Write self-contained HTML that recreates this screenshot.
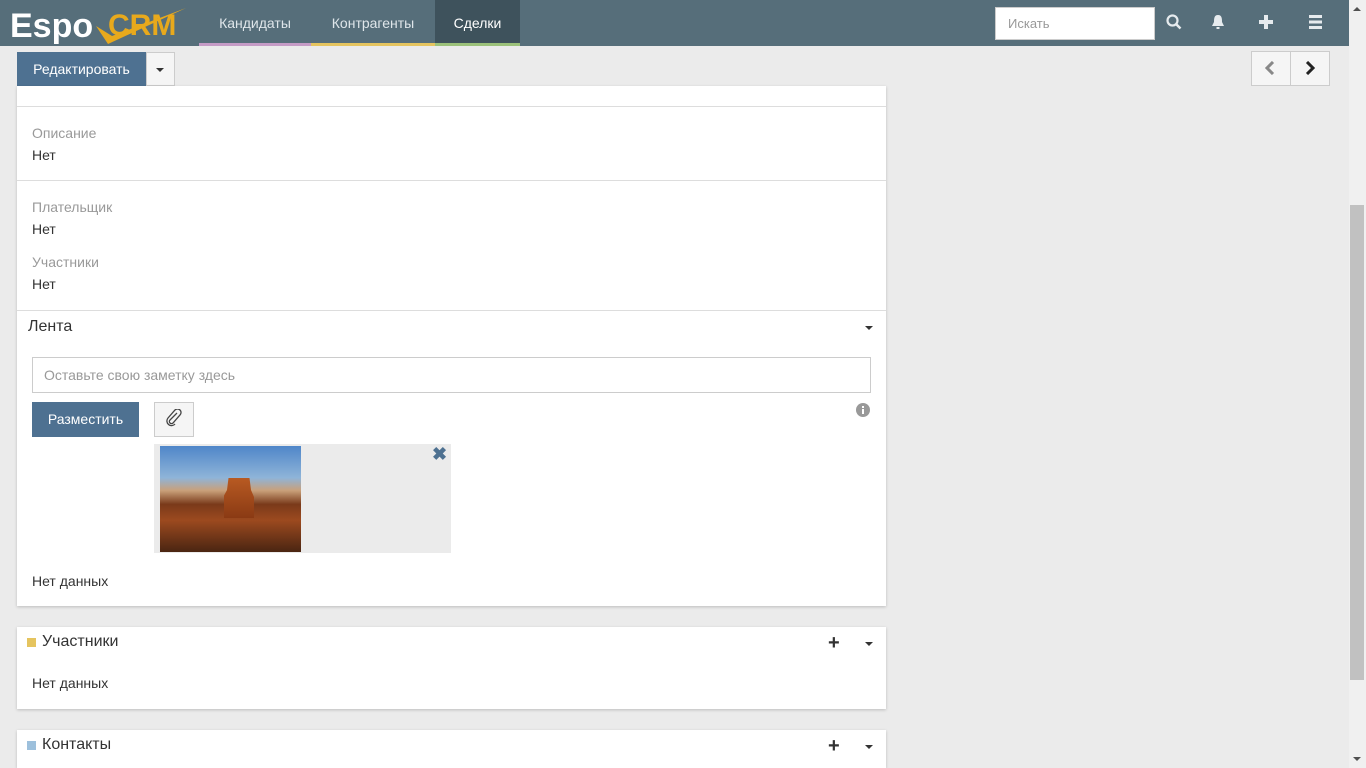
<!DOCTYPE html>
<html style="overflow:hidden;height:768px"><head><meta charset="utf-8"><style>
*{box-sizing:border-box;margin:0;padding:0}
body{width:1366px;height:768px;overflow:hidden;background:#ebebeb;font-family:"Liberation Sans",sans-serif;font-size:14px;color:#333;position:relative}
.nav{position:absolute;left:0;top:0;width:1349px;height:46px;background:#566e7a}
.tab{position:absolute;top:0;height:46px;color:#dfe6ea;font-size:14px;line-height:46px;text-align:center}
.abs{position:absolute}
.panel{position:absolute;left:17px;width:869px;background:#fff;box-shadow:0 1px 3px rgba(0,0,0,.2)}
.lbl{position:absolute;left:32px;color:#999;font-size:14px}
.val{position:absolute;left:32px;color:#333;font-size:14px}
.hr{position:absolute;left:17px;width:869px;height:1px;background:#ddd}
.caret{position:absolute;width:0;height:0;border-left:4px solid transparent;border-right:4px solid transparent;border-top:4px solid #333}
.plus{position:absolute;font-weight:bold;font-size:20px;color:#333;line-height:1}
</style></head><body>
<div class="nav">
 <svg class="abs" style="left:8px;top:4px" width="185" height="40" viewBox="0 0 185 40">
  <text x="2" y="33" font-family="Liberation Sans" font-size="34" font-weight="bold" fill="#fff">Espo</text>
  <text x="100" y="31" font-family="Liberation Sans" font-size="30" font-weight="bold" fill="#e8a91c">CRM</text>
  <path d="M88 22 L100 40 L178 4 L104 32 Z" fill="#e8a91c"/>
 </svg>
 <div class="tab" style="left:199px;width:112px;border-bottom:3px solid #c59bc6">Кандидаты</div>
 <div class="tab" style="left:311px;width:124px;border-bottom:3px solid #e5c45f">Контрагенты</div>
 <div class="tab" style="left:435px;width:85px;background:#3e525c;color:#fff;border-bottom:3px solid #9bc17a">Сделки</div>
 <div class="abs" style="left:995px;top:7px;width:160px;height:33px;background:#fff;border:1px solid #ccc;color:#999;font-size:13px;line-height:31px;padding-left:12px">Искать</div>
 <svg class="abs" style="left:1166px;top:14px" width="16" height="16"><circle cx="6.5" cy="6.5" r="5" stroke="#e6ebee" stroke-width="2.2" fill="none"/><line x1="10" y1="10" x2="14.5" y2="14.5" stroke="#e6ebee" stroke-width="2.5"/></svg>
 <svg class="abs" style="left:1211px;top:14px" width="14" height="16"><path d="M7 1 C3 1 3 5 3 8 L1 12 L13 12 L11 8 C11 5 11 1 7 1Z" fill="#e6ebee"/><rect x="5.5" y="13" width="3" height="2" fill="#e6ebee"/></svg>
 <svg class="abs" style="left:1259px;top:15px" width="14" height="14"><rect x="5" y="0" width="4" height="14" fill="#e6ebee"/><rect x="0" y="5" width="14" height="4" fill="#e6ebee"/></svg>
 <svg class="abs" style="left:1309px;top:15px" width="13" height="14"><rect y="0" width="13" height="3" fill="#e6ebee"/><rect y="5.5" width="13" height="3" fill="#e6ebee"/><rect y="11" width="13" height="3" fill="#e6ebee"/></svg>
</div>
<div class="abs" style="left:1349px;top:0;width:17px;height:768px;background:#f0f0f0"></div>
<div class="abs" style="left:1350px;top:205px;width:14px;height:475px;background:#c1c1c1"></div>
<div class="abs" style="left:1353px;top:7px;border-left:4px solid transparent;border-right:4px solid transparent;border-bottom:4px solid #505050"></div>
<div class="abs" style="left:1353px;top:757px;border-left:4px solid transparent;border-right:4px solid transparent;border-top:4px solid #505050"></div>

<div class="abs" style="left:17px;top:52px;width:129px;height:34px;background:#4e7191;color:#fff;line-height:34px;text-align:center">Редактировать</div>
<div class="abs" style="left:146px;top:52px;width:29px;height:34px;background:#f5f5f5;border:1px solid #ccc"></div>
<div class="caret" style="left:156px;top:68px"></div>
<div class="abs" style="left:1251px;top:51px;width:40px;height:35px;background:#f5f5f5;border:1px solid #ccc"></div>
<div class="abs" style="left:1290px;top:51px;width:40px;height:35px;background:#f5f5f5;border:1px solid #ccc"></div>
<svg class="abs" style="left:1265px;top:61px" width="10" height="14"><path d="M8 1 L2 7 L8 13" stroke="#888" stroke-width="3" fill="none"/></svg>
<svg class="abs" style="left:1305px;top:61px" width="10" height="14"><path d="M2 1 L8 7 L2 13" stroke="#222" stroke-width="3" fill="none"/></svg>

<div class="panel" style="top:86px;height:520px"></div>
<div class="hr" style="top:106px"></div>
<div class="lbl" style="top:125px">Описание</div>
<div class="val" style="top:147px">Нет</div>
<div class="hr" style="top:180px"></div>
<div class="lbl" style="top:199px">Плательщик</div>
<div class="val" style="top:221px">Нет</div>
<div class="lbl" style="top:254px">Участники</div>
<div class="val" style="top:276px">Нет</div>
<div class="hr" style="top:310px"></div>
<div class="abs" style="left:28px;top:318px;font-size:16px">Лента</div>
<div class="caret" style="left:865px;top:326px"></div>
<div class="abs" style="left:32px;top:357px;width:839px;height:36px;border:1px solid #ccc;color:#999;padding:9px 11px;font-size:14px">Оставьте свою заметку здесь</div>
<div class="abs" style="left:32px;top:402px;width:107px;height:35px;background:#4e7191;color:#fff;line-height:35px;text-align:center">Разместить</div>
<div class="abs" style="left:154px;top:402px;width:40px;height:35px;background:#f5f5f5;border:1px solid #ccc"></div>
<svg class="abs" style="left:165px;top:409px" width="18" height="18"><path d="M12 4 L5 11 A2 2 0 0 0 8 14 L15 6 A3.5 3.5 0 0 0 10 1 L3 9 A4.5 4.5 0 0 0 10 15" stroke="#444" stroke-width="1.3" fill="none"/></svg>
<svg class="abs" style="left:856px;top:403px" width="14" height="14"><circle cx="7" cy="7" r="7" fill="#999"/><rect x="6" y="6" width="2" height="5" fill="#fff"/><rect x="6" y="3" width="2" height="2" fill="#fff"/></svg>
<div class="abs" style="left:154px;top:444px;width:297px;height:109px;background:#ebebeb"></div>
<div class="abs" style="left:160px;top:446px;width:141px;height:106px;background:linear-gradient(#4f86c9 0%,#8fb4d8 30%,#c9a07a 42%,#7a3a1a 55%,#9c4a1f 70%,#4a2512 100%)"></div>
<div class="abs" style="left:224px;top:478px;width:30px;height:40px;background:linear-gradient(#b85a22,#8a3a14);clip-path:polygon(15% 0,85% 0,90% 30%,130% 100%,-40% 100%,10% 30%)"></div>
<div class="abs" style="left:432px;top:444px;color:#4e7191;font-size:18px;font-weight:bold">✖</div>
<div class="val" style="top:573px">Нет данных</div>

<div class="panel" style="top:627px;height:82px"></div>
<div class="abs" style="left:27px;top:638px;width:9px;height:9px;background:#e5c45f"></div>
<div class="abs" style="left:42px;top:633px;font-size:16px">Участники</div>
<div class="plus" style="left:828px;top:633px">+</div>
<div class="caret" style="left:865px;top:642px"></div>
<div class="val" style="top:675px">Нет данных</div>

<div class="panel" style="top:730px;height:38px"></div>
<div class="abs" style="left:27px;top:741px;width:9px;height:9px;background:#9dc0dc"></div>
<div class="abs" style="left:42px;top:736px;font-size:16px">Контакты</div>
<div class="plus" style="left:828px;top:736px">+</div>
<div class="caret" style="left:865px;top:745px"></div>
</body></html>
